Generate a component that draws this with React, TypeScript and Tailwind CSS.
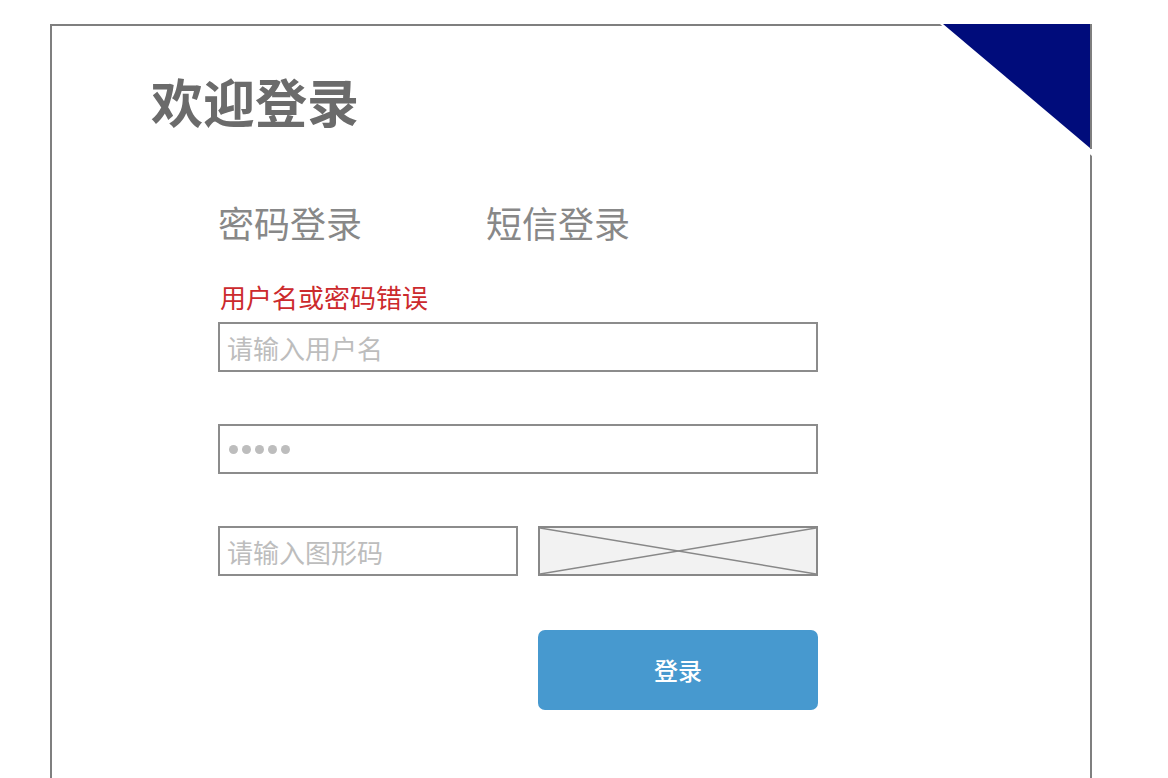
const cjk = { fontFamily: '"Noto Sans CJK SC", "Noto Sans", sans-serif' };

function CornerFlag() {
  // folded corner on the frame's top-right
  return (
    <svg className="absolute -top-[2px] -right-[2px]" width="152" height="132" viewBox="0 0 152 132">
      <polygon points="0,0 152,0 152,132" fill="#ffffff" />
      <polygon points="3,0 150,0 150,124" fill="#000c7b" />
      <rect x="150" y="0" width="2" height="125" fill="#7f7f7f" />
    </svg>
  );
}

function CaptchaImage() {
  return (
    <div className="relative w-[280px] h-[50px] border-2 border-[#888] bg-[#f2f2f2]">
      <svg className="absolute inset-0" width="100%" height="100%" viewBox="0 0 276 46" preserveAspectRatio="none">
        <line x1="0" y1="0" x2="276" y2="46" stroke="#888" strokeWidth="1.5" />
        <line x1="0" y1="46" x2="276" y2="0" stroke="#888" strokeWidth="1.5" />
      </svg>
    </div>
  );
}

export default function App() {
  const input = 'h-[50px] border-2 border-[#8c8c8c] bg-white px-[7px] text-[26px] text-[#333] ' +
    'placeholder:text-[#bdbdbd] outline-none';

  return (
    <div className="min-h-screen bg-white pl-[50px] pt-[24px] overflow-hidden" style={cjk}>
      <div className="relative w-[1042px] h-[800px] border-2 border-b-0 border-[#7f7f7f]">
        <CornerFlag />

        <div className="pl-[99px] pt-[49px]">
          <h1 className="m-0 text-[52px] leading-[52px] font-bold text-[#6b6b6b]">欢迎登录</h1>

          <div className="ml-[67px] mt-[77px] w-[600px]">
            <div className="flex gap-[124px] text-[36px] leading-[36px] text-[#888]">
              <span>密码登录</span>
              <span>短信登录</span>
            </div>

            <p className="m-0 mt-[44px] ml-[2px] text-[26px] leading-[26px] text-[#cc2a2d]">用户名或密码错误</p>

            <input className={input + ' mt-[12px] w-[600px] block'} placeholder="请输入用户名" />

            <div className={input + ' mt-[52px] w-[600px] flex items-center gap-[4px] pl-[9px]'}>
              {[0, 1, 2, 3, 4].map(i => (
                <span key={i} className="w-[9px] h-[9px] rounded-full bg-[#bdbdbd]" />
              ))}
            </div>

            <div className="mt-[52px] flex gap-[20px]">
              <input className={input + ' w-[300px]'} placeholder="请输入图形码" />
              <CaptchaImage />
            </div>

            <div className="mt-[54px] flex justify-end">
              <button className="w-[280px] h-[80px] rounded-[7px] bg-[#4799cf] text-white text-[24px] font-medium">
                登录
              </button>
            </div>
          </div>
        </div>
      </div>
    </div>
  );
}
